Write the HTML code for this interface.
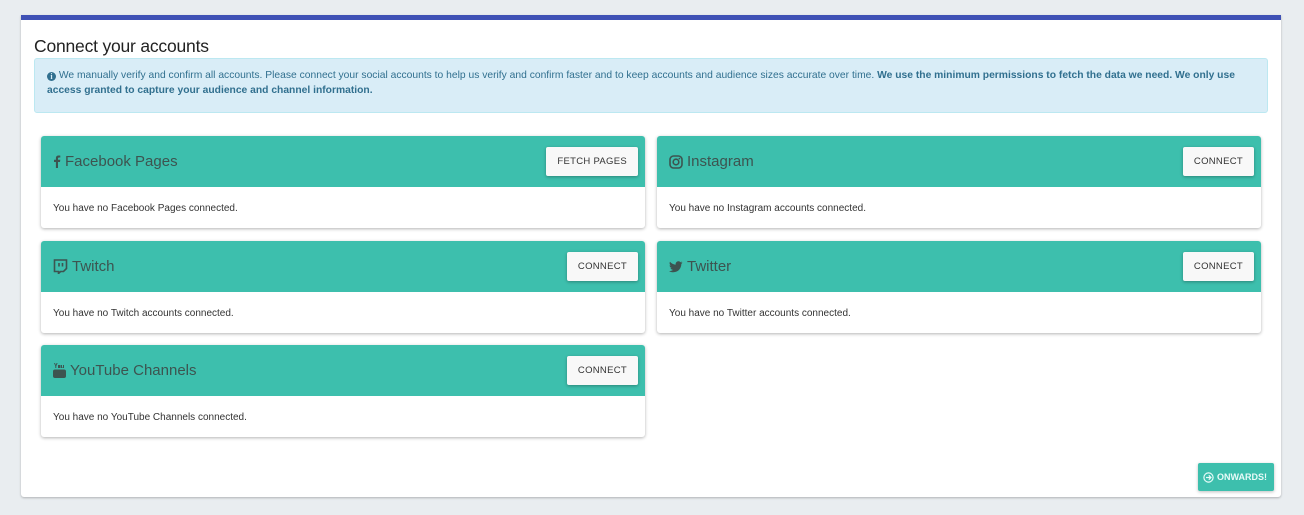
<!DOCTYPE html>
<html><head><meta charset="utf-8"><style>
*{box-sizing:border-box;margin:0;padding:0}
body{width:1304px;height:515px;background:#e9edf0;font-family:"Liberation Sans",sans-serif;position:relative;overflow:hidden}
.card{position:absolute;left:21px;top:15px;width:1260px;height:482px;background:#fff;border-top:5px solid #3f51b5;border-radius:0 0 3px 3px;box-shadow:0 1px 2px rgba(0,0,0,.25)}
h1{position:absolute;left:13px;top:16px;font-weight:normal;font-size:17.5px;color:#222;letter-spacing:-0.2px}
.alert{position:absolute;left:13px;top:38px;width:1234px;height:55px;background:#d9edf7;border:1px solid #bce8f1;border-radius:3px;color:#31708f;font-size:10.3px;line-height:15px;padding:9px 12px}
.alert b{font-weight:bold}
.info{display:inline-block;width:9px;height:9px;border-radius:50%;background:#31708f;color:#d9edf7;font-size:8px;line-height:9px;text-align:center;font-weight:bold;vertical-align:-1px;font-family:"Liberation Serif",serif}
.panel{position:absolute;width:604px;height:92px;background:#fff;border-radius:3px;box-shadow:0 1px 3px rgba(0,0,0,.3);overflow:hidden}
.ph{height:51px;background:#3dbfad;position:relative}
.pt{position:absolute;left:12px;top:17px;font-size:15px;color:#3d5450;display:flex;align-items:center;gap:4px}
.btn{position:absolute;right:7px;top:11px;height:29px;background:#f8f8f8;font-size:9.5px;color:#333;line-height:29px;padding:0 11px;border-radius:2px;box-shadow:0 1px 3px rgba(0,0,0,.3);letter-spacing:.3px}
.pb{font-size:10px;color:#333;padding:16px 12px}
.on{position:absolute;left:1198px;top:463px;width:76px;height:28px;background:#3dbfad;border-radius:2px;font-weight:bold;font-size:9px;line-height:28px;padding-left:5px;box-shadow:0 1px 3px rgba(0,0,0,.25);display:flex;align-items:center;gap:3px;color:#e8fbf8}
</style></head><body>
<div class="card">
<h1>Connect your accounts</h1>
<div class="alert"><span class="info">i</span> We manually verify and confirm all accounts. Please connect your social accounts to help us verify and confirm faster and to keep accounts and audience sizes accurate over time. <b>We use the minimum permissions to fetch the data we need. We only use access granted to capture your audience and channel information.</b></div>
</div>
<div class="panel" style="left:41px;top:136px"><div class="ph"><div class="pt"><svg width="8" height="13" viewBox="0 0 8 13"><path d="M5 13V7h2l.3-2.2H5V3.5c0-.6.2-1 1-1h1.3V.6C7 .5 6.3.5 5.6.5 4 .5 2.9 1.4 2.9 3.2v1.6H1V7h1.9v6z" fill="#3d5450"/></svg>Facebook Pages</div><div class="btn">FETCH PAGES</div></div><div class="pb">You have no Facebook Pages connected.</div></div>
<div class="panel" style="left:657px;top:136px"><div class="ph"><div class="pt"><svg width="14" height="14" viewBox="0 0 14 14"><rect x="1" y="1" width="12" height="12" rx="3.5" fill="none" stroke="#3d5450" stroke-width="1.6"/><circle cx="7" cy="7" r="2.8" fill="none" stroke="#3d5450" stroke-width="1.6"/><circle cx="10.4" cy="3.6" r=".8" fill="#3d5450"/></svg>Instagram</div><div class="btn">CONNECT</div></div><div class="pb">You have no Instagram accounts connected.</div></div>
<div class="panel" style="left:41px;top:241px"><div class="ph"><div class="pt"><svg width="15" height="15" viewBox="0 0 15 15"><path d="M1.5 1h12v8.5l-3 3h-3l-2 2v-2h-4z" fill="none" stroke="#3d5450" stroke-width="1.6"/><path d="M6 4v3.5M9.5 4v3.5" stroke="#3d5450" stroke-width="1.6"/></svg>Twitch</div><div class="btn">CONNECT</div></div><div class="pb">You have no Twitch accounts connected.</div></div>
<div class="panel" style="left:657px;top:241px"><div class="ph"><div class="pt"><svg width="14" height="12" viewBox="0 0 14 12"><path d="M13.5 1.5c-.5.2-1 .4-1.6.5.6-.4 1-.9 1.2-1.5-.5.3-1.1.5-1.7.7C10.9.6 10.2.3 9.4.3 7.9.3 6.6 1.6 6.6 3.1c0 .2 0 .4.1.6C4.4 3.6 2.3 2.5 1 .8.7 1.2.6 1.7.6 2.2c0 1 .5 1.8 1.2 2.3-.4 0-.9-.1-1.2-.3 0 1.4 1 2.5 2.200 2.8-.4.1-.9.1-1.3 0 .4 1.1 1.4 1.9 2.6 1.9C2.9 9.8 1.5 10.2 0 10.1c1.2.8 2.7 1.2 4.3 1.2 5.2 0 8-4.300 8-8v-.4c.5-.4 1-.9 1.2-1.4z" fill="#3d5450"/></svg>Twitter</div><div class="btn">CONNECT</div></div><div class="pb">You have no Twitter accounts connected.</div></div>
<div class="panel" style="left:41px;top:345px"><div class="ph"><div class="pt"><svg width="13" height="15" viewBox="0 0 13 15"><path d="M1 0l1.3 3V5h1V3L4.6 0H3.6L2.8 2 2 0zM5 2h2.5v3H5zM8 2h1v2.5h1V2h1v3H8z" fill="#3d5450"/><rect x="0" y="6.5" width="13" height="8.5" rx="2" fill="#3d5450"/></svg>YouTube Channels</div><div class="btn">CONNECT</div></div><div class="pb">You have no YouTube Channels connected.</div></div>
<div class="on"><svg width="11" height="11" viewBox="0 0 11 11"><circle cx="5.5" cy="5.5" r="4.6" fill="none" stroke="#e8fbf8" stroke-width="1.2"/><path d="M3 5.5h5M5.8 3.3l2.2 2.2-2.2 2.2" fill="none" stroke="#e8fbf8" stroke-width="1.2"/></svg>ONWARDS!</div>
</body></html>
